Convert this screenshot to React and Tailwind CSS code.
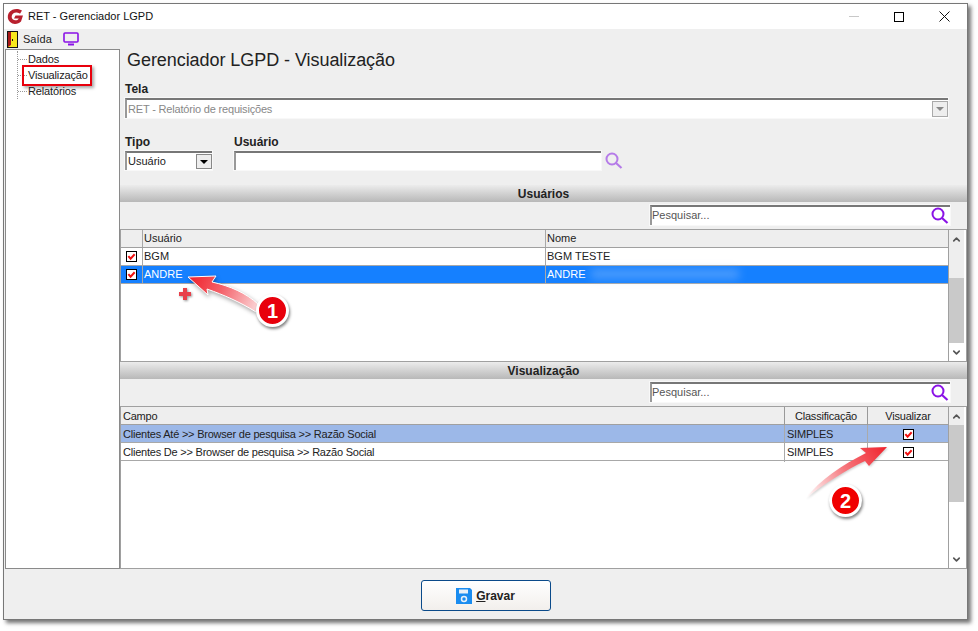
import { ChevronUp, ChevronDown } from "lucide-react";

function Lens({ className = "text-[#8a12e6]" }) {
  return (
    <svg width="18" height="18" viewBox="0 0 18 18" fill="none" stroke="currentColor" className={className}>
      <circle cx="7" cy="7" r="5.5" strokeWidth="2" />
      <path d="M11 11l5.5 5" strokeWidth="2.2" />
    </svg>
  );
}

function Check() {
  return (
    <span className="flex h-[11px] w-[11px] items-center justify-center border border-black bg-white">
      <svg width="9" height="9" viewBox="0 0 10 10" fill="none">
        <path d="M1.5 4.5l2.5 3 4.5-5" stroke="#f01010" strokeWidth="2.2" />
      </svg>
    </span>
  );
}

function SectionBand({ title }) {
  return (
    <div className="flex h-[17px] items-center justify-center bg-gradient-to-b from-[#ececec] to-[#b8b8b8] text-[12px] font-bold text-[#222]">
      {title}
    </div>
  );
}

function SearchBox() {
  return (
    <div className="flex justify-end pr-[17px]">
      <div className="flex h-[20px] w-[300px] items-center justify-between border-t-2 border-l-2 border-t-[#777] border-l-[#999] bg-white pr-[1px] text-[11px] text-[#555] outline outline-1 outline-[#f8f8f8]">
        <span className="mb-[2px]">Pesquisar...</span>
        <Lens />
      </div>
    </div>
  );
}

function ScrollBar({ thumbTop, thumbHeight }) {
  return (
    <div className="flex w-[17px] shrink-0 flex-col bg-white">
      <div className="flex w-[15px] flex-col bg-[#eee]" style={{ height: thumbTop }}>
        <div className="flex h-[18px] items-center justify-center">
          <ChevronUp size={11} strokeWidth={3.5} className="text-[#555]" />
        </div>
      </div>
      <div className="w-[15px] bg-[#c9c9c9]" style={{ height: thumbHeight }} />
      <div className="flex flex-1 items-end">
        <div className="flex h-[18px] w-[15px] items-center justify-center">
          <ChevronDown size={11} strokeWidth={3.5} className="text-[#555]" />
        </div>
      </div>
    </div>
  );
}

function UsersGrid() {
  const rows = [
    { user: "BGM", name: "BGM TESTE" },
    { user: "ANDRE", name: "ANDRE", selected: true },
  ];
  return (
    <div className="mt-[4px] flex h-[133px] border border-[#a0a0a0] bg-white text-[11px] text-[#222]">
      <div className="flex-1 border-r border-[#a0a0a0]">
        <div className="grid h-[18px] grid-cols-[22px_403px_1fr] items-center border-b border-[#a0a0a0] bg-[#eee] leading-[17px]">
          <div className="h-full border-r border-[#a8a8a8]" />
          <div className="h-full border-r border-[#a8a8a8] pl-[1px]">Usuário</div>
          <div className="pl-[1px]">Nome</div>
        </div>
        {rows.map((row) => (
          <div
            key={row.user}
            className={`grid h-[18px] grid-cols-[22px_403px_1fr] items-center border-b border-[#a8a8a8] leading-[17px] ${
              row.selected ? "bg-[#1580ff] text-white" : "bg-white"
            }`}
          >
            <div className="flex h-full items-center justify-center border-r border-[#a8a8a8]">
              <Check />
            </div>
            <div className="h-full border-r border-[#a8a8a8] pl-[1px]">{row.user}</div>
            <div className="relative h-full pl-[1px]">
              {row.name}
              {row.selected && (
                <span className="absolute top-[3px] left-[44px] h-[10px] w-[150px] rounded-full bg-[#7fb6fb] opacity-50 blur-[4px]" />
              )}
            </div>
          </div>
        ))}
      </div>
      <ScrollBar thumbTop={48} thumbHeight={65} />
    </div>
  );
}

function FieldsGrid() {
  const rows = [
    { field: "Clientes Até >> Browser de pesquisa >> Razão Social", selected: true },
    { field: "Clientes De >> Browser de pesquisa >> Razão Social" },
  ];
  return (
    <div className="mt-[4px] flex flex-1 border border-[#a0a0a0] bg-white text-[11px] tracking-[-0.22px] text-[#222]">
      <div className="flex-1 border-r border-[#a0a0a0]">
        <div className="grid h-[18px] grid-cols-[664px_83px_1fr] items-center border-b border-[#a0a0a0] bg-[#eee] leading-[19px]">
          <div className="h-full border-r border-[#999] pl-[2px]">Campo</div>
          <div className="h-full border-r border-[#999] text-center">Classificação</div>
          <div className="text-center">Visualizar</div>
        </div>
        {rows.map((row) => (
          <div
            key={row.field}
            className={`grid h-[18px] grid-cols-[664px_83px_1fr] items-center border-b border-[#a8a8a8] leading-[19px] ${
              row.selected ? "bg-[#9cb8e8]" : "bg-white"
            }`}
          >
            <div className="h-full border-r border-[#aaa] pl-[2px]">{row.field}</div>
            <div className="h-full border-r border-[#aaa] pl-[2px]">SIMPLES</div>
            <div className="flex justify-center">
              <Check />
            </div>
          </div>
        ))}
      </div>
      <ScrollBar thumbTop={18} thumbHeight={77} />
    </div>
  );
}

function Sidebar() {
  return (
    <div className="relative w-[115px] shrink-0 border border-[#8a8a8a] bg-white pt-[1px] text-[11px] tracking-[-0.15px] text-[#222]">
      <div className="ml-[11px] flex flex-col border-l border-dotted border-[#999]">
        {["Dados", "Visualização", "Relatórios"].map((item) => (
          <div key={item} className="flex h-[16px] items-center">
            <span className="mr-[1px] w-[9px] border-t border-dotted border-[#999]" />
            <span>{item}</span>
          </div>
        ))}
      </div>
      <div className="absolute top-[15px] left-[16px] h-[21px] w-[70px] border-2 border-[#e8000c] shadow-[2px_2px_3px_rgba(0,0,0,0.35)]" />
    </div>
  );
}

function Annotations() {
  return (
    <>
      <svg width="978" height="631" className="pointer-events-none absolute top-0 left-0">
        <defs>
          <linearGradient id="arrowOne" gradientUnits="userSpaceOnUse" x1="190" y1="278" x2="258" y2="308">
            <stop offset="0" stopColor="#f0222c" />
            <stop offset="0.45" stopColor="#f4626a" />
            <stop offset="1" stopColor="#fbd6d8" />
          </linearGradient>
          <linearGradient id="arrowTwo" gradientUnits="userSpaceOnUse" x1="887" y1="448" x2="807" y2="498">
            <stop offset="0" stopColor="#f0222c" />
            <stop offset="0.5" stopColor="#f6777d" />
            <stop offset="1" stopColor="#ffffff" />
          </linearGradient>
        </defs>
        <path
          d="M188 277 L216 276 L212 282 C230 286 246 293 258 304 L256 312 C240 302 224 295 207 289 L208 295 Z"
          fill="url(#arrowOne)"
          stroke="#fff"
          strokeWidth="1"
          style={{ filter: "drop-shadow(1px 2px 2px rgba(0,0,0,0.35))" }}
        />
        <path
          d="M887 447 L860 448 L866 453 C842 465 820 480 806 498 C824 484 846 470 865 461 L869 466 Z"
          fill="url(#arrowTwo)"
          style={{ filter: "drop-shadow(1px 1px 1px rgba(0,0,0,0.2))" }}
        />
        <path
          d="M185 288v12M179 294h12"
          stroke="#e8404a"
          strokeWidth="4"
          style={{ filter: "drop-shadow(1px 1px 1px rgba(0,0,0,0.4))" }}
        />
      </svg>
      <div className="absolute top-[294px] left-[256px] flex h-[33px] w-[33px] items-center justify-center rounded-full border-[3px] border-white bg-[#e8000c] font-['Liberation_Sans',sans-serif] text-[20px] font-bold text-white shadow-[1px_2px_3px_rgba(0,0,0,0.5)]">
        1
      </div>
      <div className="absolute top-[484px] left-[829px] flex h-[33px] w-[33px] items-center justify-center rounded-full border-[3px] border-white bg-[#f00000] font-['Liberation_Sans',sans-serif] text-[20px] font-bold text-white shadow-[1px_2px_3px_rgba(0,0,0,0.5)]">
        2
      </div>
    </>
  );
}

export default function App() {
  return (
    <div className="relative h-[631px] w-[978px] overflow-hidden bg-white font-['Liberation_Sans',sans-serif]">
      <div className="absolute top-[3px] left-[3px] flex h-[617px] w-[965px] flex-col border border-[#777] bg-[#efefef] shadow-[3px_3px_4px_rgba(0,0,0,0.55)]">
        {/* title bar */}
        <div className="flex h-[25px] shrink-0 items-center bg-white pl-[3px] text-[11px] text-[#111]">
          <svg width="17" height="17" viewBox="0 0 17 17" className="mr-[4px]">
            <path d="M15 2.5C12.5.8 8.500.300 5.500 1.800 2 3.500.500 6.500.800 9.500c.3 3.500 3.500 6.500 7.200 6.500 2.500 0 4.500-1 6-2.500L16 7.500H8.500l-1.500 3h4.800c-.8 1.500-2.300 2-3.800 1.800-2.200-.3-3.500-2-3.300-4 .2-2.500 2.500-4 5-3.800 1.500.1 2.500.6 3.300 1.200z" fill="#b8202e" />
          </svg>
          <span>RET - Gerenciador LGPD</span>
          <div className="ml-auto flex items-center">
            <span className="mr-[35px] h-px w-[10px] bg-[#c8c8c8]" />
            <span className="mr-[35px] h-[10px] w-[10px] border border-black" />
            <svg width="11" height="11" viewBox="0 0 11 11" className="mr-[17px]">
              <path d="M.5.500l10 10M10.500.500l-10 10" stroke="#111" strokeWidth="1" />
            </svg>
          </div>
        </div>

        {/* toolbar */}
        <div className="flex h-[20px] shrink-0 items-center pl-[3px] text-[11px] text-[#222]">
          <svg width="11" height="17" viewBox="0 0 11 17">
            <rect width="11" height="17" fill="#111" />
            <rect x="1" y="1" width="9" height="15" fill="#f8e81c" />
            <path d="M1 1h3v13l-3 2z" fill="#a81818" />
            <rect x="5" y="8" width="1" height="2" fill="#111" />
          </svg>
          <span className="ml-[5px]">Saída</span>
          <svg width="16" height="14" viewBox="0 0 16 14" fill="none" className="ml-[11px]">
            <rect x="1" y="1" width="14" height="9" rx="1" stroke="#8a12e6" strokeWidth="1.600" />
            <path d="M5 12.500h6" stroke="#8a12e6" strokeWidth="2" />
          </svg>
        </div>

        <div className="flex h-[520px] shrink-0 pl-[1px]">
          <Sidebar />

          {/* content */}
          <div className="flex min-w-0 flex-1 flex-col">
            <div className="h-[34px] pt-[1px] pl-[7px] text-[18px] leading-[20px] tracking-[-0.06px] text-[#222]">
              Gerenciador LGPD - Visualização
            </div>
            <div className="pl-[5px] text-[12px] leading-[13px] font-bold text-[#222]">Tela</div>
            <div className="mt-[2px] ml-[5px] flex h-[20px] w-[823px] shrink-0 items-center justify-between border-t-2 border-l-2 border-t-[#777] border-l-[#999] bg-white pl-[1px] text-[11px] tracking-[-0.18px] text-[#888] outline outline-1 outline-[#f8f8f8]">
              <span>RET - Relatório de requisições</span>
              <span className="flex h-[16px] w-[16px] items-center justify-center border border-[#aaa] bg-[#eee]">
                <span className="h-0 w-0 border-x-[4px] border-t-[4px] border-x-transparent border-t-[#888]" />
              </span>
            </div>

            <div className="mt-[18px] flex pl-[5px]">
              <div className="w-[109px]">
                <div className="text-[12px] leading-[13px] font-bold text-[#222]">Tipo</div>
                <div className="mt-[2px] flex h-[19px] w-[87px] items-center justify-between border-t-2 border-l-2 border-t-[#777] border-l-[#999] bg-white pl-[1px] text-[11px] text-[#222] outline outline-1 outline-[#f8f8f8]">
                  <span>Usuário</span>
                  <span className="flex h-[15px] w-[16px] items-center justify-center border border-[#888] bg-[#eee]">
                    <span className="h-0 w-0 border-x-[4px] border-t-[4px] border-x-transparent border-t-black" />
                  </span>
                </div>
              </div>
              <div>
                <div className="text-[12px] leading-[13px] font-bold text-[#222]">Usuário</div>
                <div className="mt-[2px] flex items-center">
                  <div className="h-[19px] w-[367px] border-t-2 border-l-2 border-t-[#777] border-l-[#999] bg-white outline outline-1 outline-[#f8f8f8]" />
                  <Lens className="ml-[4px] text-[#b57be8]" />
                </div>
              </div>
            </div>

            <div className="mt-[15px]">
              <SectionBand title="Usuários" />
            </div>
            <div className="mt-[3px]">
              <SearchBox />
            </div>
            <UsersGrid />
            <SectionBand title="Visualização" />
            <div className="mt-[3px]">
              <SearchBox />
            </div>
            <FieldsGrid />
          </div>
        </div>

        {/* footer */}
        <div className="flex flex-1 justify-center pt-[11px]">
          <button className="flex h-[31px] w-[130px] items-center justify-center gap-[4px] rounded-[3px] border border-[#0a4a8a] bg-gradient-to-b from-white to-[#f2efec] text-[12px] font-bold text-[#222]">
            <svg width="16" height="16" viewBox="0 0 16 16">
              <path d="M0 0h14l2 2v14H0z" fill="#1a8cf0" />
              <rect x="3" y="1.500" width="9" height="4" fill="#e8f0f8" />
              <circle cx="8" cy="11" r="2.500" fill="none" stroke="#e8f0f8" strokeWidth="1.500" />
            </svg>
            <span>
              <span className="underline">G</span>ravar
            </span>
          </button>
        </div>
      </div>
      <Annotations />
    </div>
  );
}
